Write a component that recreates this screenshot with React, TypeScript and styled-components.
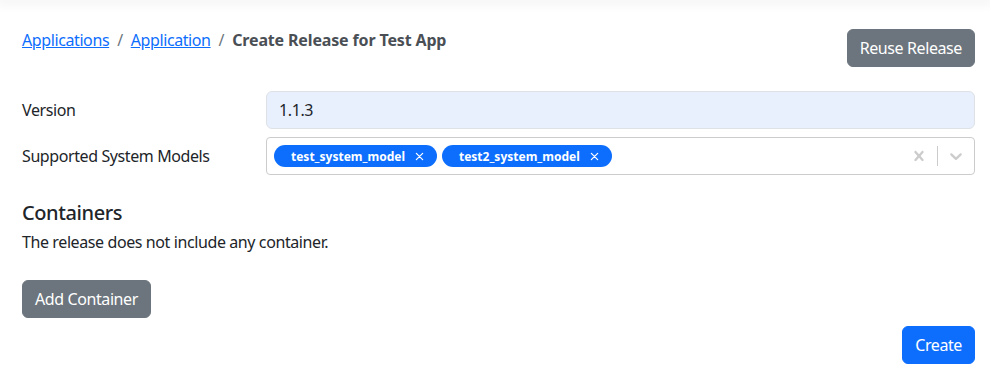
import React from "react";
import styled, { createGlobalStyle } from "styled-components";

const Global = createGlobalStyle`
  html, body { margin: 0; padding: 0; background: #fff; }
  body {
    font-family: "Noto Sans", "Open Sans", sans-serif;
    font-size: 16px;
    letter-spacing: -0.4px;
    color: #212529;
  }
  * { box-sizing: border-box; }
`;

const TopShadow = styled.div`
  height: 0;
  box-shadow: 0 0 12px 4px rgba(0, 0, 0, 0.06);
`;

const Page = styled.main`
  padding: 28px 15px 16px 22px;
  display: flex;
  flex-direction: column;
`;

const Header = styled.div`
  display: flex;
  justify-content: space-between;
  align-items: flex-start;
  margin-bottom: 24px;
`;

const Crumbs = styled.nav`
  display: flex;
  align-items: center;
  line-height: 24px;
  font-size: 16px;
`;

const CrumbLink = styled.a`
  color: #0d6efd;
  text-decoration: underline;
  cursor: pointer;
`;

const Sep = styled.span`
  color: #6c757d;
  padding: 0 8px;
`;

const CrumbActive = styled.span`
  font-weight: 700;
  color: #4a4f55;
  letter-spacing: -0.15px;
`;

const Button = styled.button<{ $variant?: "secondary" | "primary" }>`
  font-family: inherit;
  font-size: 16px;
  letter-spacing: -0.4px;
  line-height: 24px;
  padding: 6px 12px;
  height: 38px;
  border-radius: 6px;
  border: 1px solid ${(p) => (p.$variant === "primary" ? "#0d6efd" : "#6c757d")};
  background: ${(p) => (p.$variant === "primary" ? "#0d6efd" : "#6c757d")};
  color: #fff;
  cursor: pointer;
`;

const HeaderButton = styled(Button)`
  margin-top: 1px;
`;

const FormRow = styled.div`
  display: grid;
  grid-template-columns: 244px 1fr;
  align-items: center;
  margin-bottom: 8px;
`;

const Label = styled.label`
  font-size: 16px;
  line-height: 24px;
`;

const TextInput = styled.input`
  font-family: inherit;
  font-size: 16px;
  letter-spacing: -0.4px;
  height: 38px;
  padding: 6px 12px;
  border: 1px solid #dee2e6;
  border-radius: 6px;
  background: #e8f0fe;
  color: #212529;
  width: 100%;
  outline: none;
`;

const Select = styled.div`
  display: flex;
  align-items: center;
  min-height: 38px;
  border: 1px solid #cccccc;
  border-radius: 4px;
  background: #fff;
`;

const Values = styled.div`
  flex: 1;
  display: flex;
  align-items: center;
  flex-wrap: wrap;
  gap: 5px;
  padding: 2px 7px;
`;

const Pill = styled.div`
  display: flex;
  align-items: center;
  height: 22px;
  padding: 0 13px 0 17px;
  border-radius: 11px;
  background: #0d6efd;
  color: #fff;
  font-size: 12px;
  font-weight: 700;
  letter-spacing: 0;
`;

const PillRemove = styled.span`
  display: flex;
  align-items: center;
  margin-left: 10px;
`;

const Indicators = styled.div`
  display: flex;
  align-items: center;
  align-self: stretch;
`;

const Indicator = styled.div`
  display: flex;
  padding: 8px;
  color: #cccccc;
`;

const IndicatorSep = styled.span`
  align-self: stretch;
  width: 1px;
  background: #cccccc;
  margin: 8px 0;
`;

const SectionTitle = styled.h5`
  font-size: 20px;
  font-weight: 500;
  line-height: 24px;
  margin: 18px 0 5px;
`;

const Para = styled.p`
  margin: 0 0 26px;
  line-height: 24px;
`;

const Footer = styled.div`
  display: flex;
  justify-content: flex-end;
  margin-top: 8px;
`;

const LeftAlign = styled.div`
  display: flex;
`;

const Cross = ({ size, sw }: { size: number; sw: number }) => (
  <svg width={size} height={size} viewBox="0 0 10 10" fill="none" stroke="currentColor" strokeWidth={sw} strokeLinecap="round">
    <path d="M1.5 1.5 L8.5 8.5 M8.5 1.5 L1.5 8.5" />
  </svg>
);

const Chevron = () => (
  <svg width="20" height="20" viewBox="0 0 20 20" fill="currentColor">
    <path d="M4.516 7.548c0.436-0.446 1.043-0.481 1.576 0l3.908 3.747 3.908-3.747c0.533-0.481 1.141-0.446 1.574 0 0.436 0.445 0.408 1.197 0 1.615-0.406 0.418-4.695 4.502-4.695 4.502-0.217 0.223-0.502 0.335-0.787 0.335s-0.57-0.112-0.789-0.335c0 0-4.287-4.084-4.695-4.502s-0.436-1.170 0-1.615z" />
  </svg>
);

const ClearIcon = () => (
  <svg width="20" height="20" viewBox="0 0 20 20" fill="currentColor">
    <path d="M14.348 14.849c-0.469 0.469-1.229 0.469-1.697 0l-2.651-3.030-2.651 3.029c-0.469 0.469-1.229 0.469-1.697 0-0.469-0.469-0.469-1.229 0-1.697l2.758-3.150-2.759-3.152c-0.469-0.469-0.469-1.228 0-1.697s1.228-0.469 1.697 0l2.652 3.031 2.651-3.031c0.469-0.469 1.228-0.469 1.697 0s0.469 1.229 0 1.697l-2.758 3.152 2.758 3.150c0.469 0.469 0.469 1.229 0 1.698z" />
  </svg>
);

export default function App() {
  const models = ["test_system_model", "test2_system_model"];
  return (
    <>
      <Global />
      <TopShadow />
      <Page>
        <Header>
          <Crumbs>
            <CrumbLink>Applications</CrumbLink>
            <Sep>/</Sep>
            <CrumbLink>Application</CrumbLink>
            <Sep>/</Sep>
            <CrumbActive>Create Release for Test App</CrumbActive>
          </Crumbs>
          <HeaderButton $variant="secondary">Reuse Release</HeaderButton>
        </Header>
        <FormRow>
          <Label>Version</Label>
          <TextInput defaultValue="1.1.3" />
        </FormRow>
        <FormRow>
          <Label>Supported System Models</Label>
          <Select>
            <Values>
              {models.map((m) => (
                <Pill key={m}>
                  {m}
                  <PillRemove>
                    <Cross size={9} sw={1.4} />
                  </PillRemove>
                </Pill>
              ))}
            </Values>
            <Indicators>
              <Indicator>
                <ClearIcon />
              </Indicator>
              <IndicatorSep />
              <Indicator>
                <Chevron />
              </Indicator>
            </Indicators>
          </Select>
        </FormRow>
        <SectionTitle>Containers</SectionTitle>
        <Para>The release does not include any container.</Para>
        <LeftAlign>
          <Button $variant="secondary">Add Container</Button>
        </LeftAlign>
        <Footer>
          <Button $variant="primary">Create</Button>
        </Footer>
      </Page>
    </>
  );
}
